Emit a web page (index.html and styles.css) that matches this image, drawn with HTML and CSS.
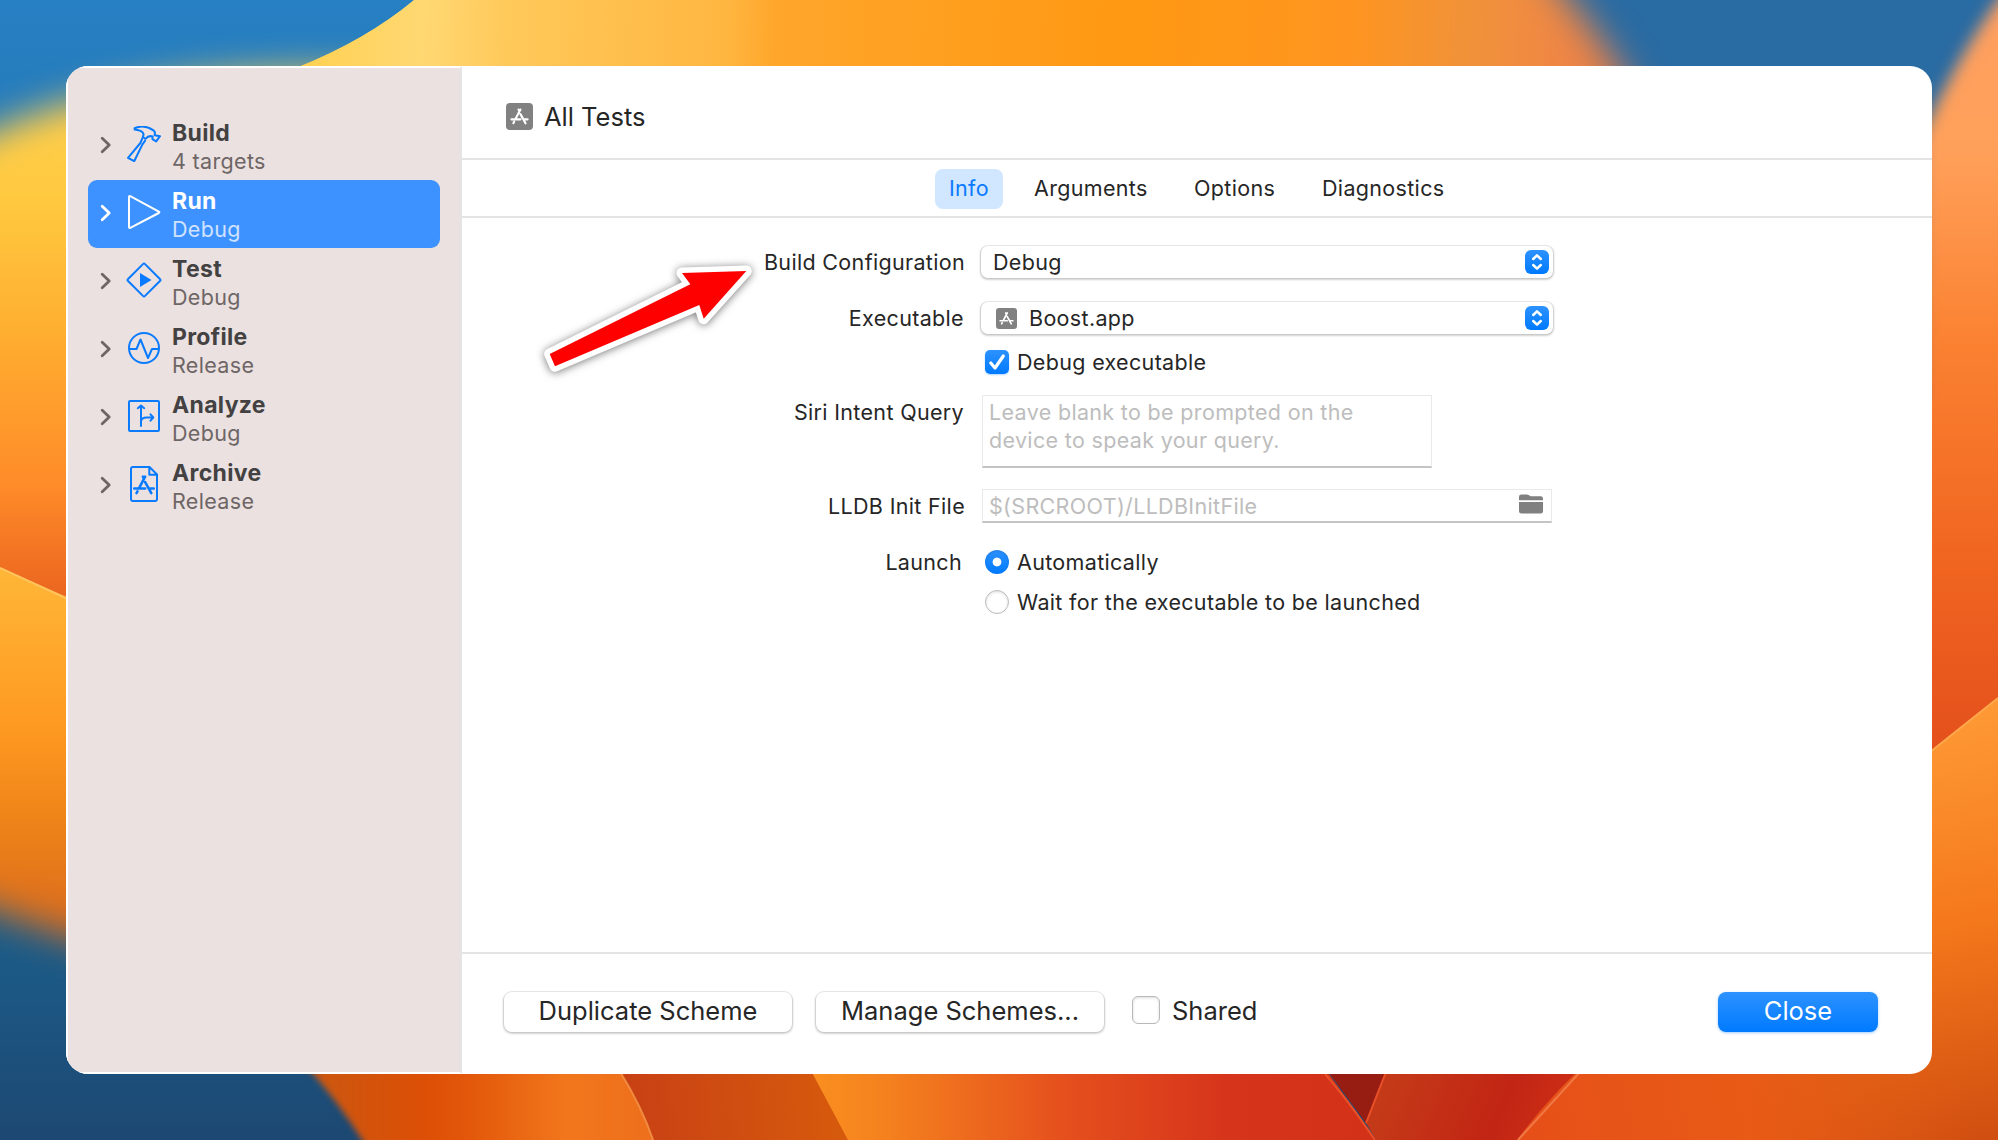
FILE: index.html
```html
<!DOCTYPE html>
<html lang="en">
<head>
<meta charset="utf-8">
<title>Scheme editor</title>
<link rel="stylesheet" href="styles.css">
</head>
<body>
<svg width="0" height="0" class="defs" aria-hidden="true">
  <symbol id="chevron" viewBox="0 0 12 18"><path d="M2.200 2.200 9.200 9l-7 6.800" fill="none" stroke="currentColor" stroke-width="2.800" stroke-linecap="round" stroke-linejoin="round"/></symbol>
  <symbol id="appstore" viewBox="0 0 24 24"><g fill="none" stroke="currentColor" stroke-width="2.700" stroke-linecap="round"><path d="M13.200 3.200 7 15M10.800 3.200 12 5.600M13.200 9 19.600 20.600M1.800 15.600h11.400M17.600 15.600h4.600M5.200 18.600l-1 1.800"/></g></symbol>
  <symbol id="updown" viewBox="0 0 24 24"><path d="M8.200 9 12 5.400l3.800 3.600M8.200 15l3.800 3.600 3.800-3.600" fill="none" stroke="#fff" stroke-width="2.500" stroke-linecap="round" stroke-linejoin="round"/></symbol>
</svg>

<svg class="wallpaper" viewBox="0 0 1998 1140" aria-hidden="true">
  <defs>
    <filter id="soft" x="-30%" y="-30%" width="160%" height="160%" color-interpolation-filters="sRGB"><feGaussianBlur stdDeviation="18"/></filter>
    <filter id="edge" x="-20%" y="-20%" width="140%" height="140%" color-interpolation-filters="sRGB"><feGaussianBlur stdDeviation="8"/></filter>
    <filter id="fine" x="-20%" y="-20%" width="140%" height="140%" color-interpolation-filters="sRGB"><feGaussianBlur stdDeviation="3"/></filter>
    <linearGradient id="blueL" x1="0" y1="0" x2="0" y2="1"><stop offset="0" stop-color="#2780c3"/><stop offset=".8" stop-color="#1c5f8b"/><stop offset="1" stop-color="#1c4873"/></linearGradient>
    <linearGradient id="left1" x1="0" y1="80" x2="0" y2="600" gradientUnits="userSpaceOnUse"><stop offset="0" stop-color="#ffd050"/><stop offset=".22" stop-color="#ffca40"/><stop offset=".48" stop-color="#ffaf30"/><stop offset=".78" stop-color="#ff8b29"/><stop offset="1" stop-color="#ea641f"/></linearGradient>
    <linearGradient id="left2" x1="0" y1="570" x2="0" y2="940" gradientUnits="userSpaceOnUse"><stop offset="0" stop-color="#ffb637"/><stop offset=".4" stop-color="#ff9b22"/><stop offset=".7" stop-color="#ed8218"/><stop offset="1" stop-color="#d9681f"/></linearGradient>
    <linearGradient id="petal" x1="300" y1="0" x2="1680" y2="40" gradientUnits="userSpaceOnUse"><stop offset="0" stop-color="#ffd050"/><stop offset=".09" stop-color="#ffd873"/><stop offset=".15" stop-color="#ffc95a"/><stop offset=".31" stop-color="#ffb640"/><stop offset=".345" stop-color="#ffa62b"/><stop offset=".6" stop-color="#ff9812"/><stop offset=".76" stop-color="#ff9520"/><stop offset=".85" stop-color="#f0923a"/><stop offset=".91" stop-color="#f08744"/><stop offset="1" stop-color="#e0744c"/></linearGradient>
    <linearGradient id="right1" x1="0" y1="0" x2="0" y2="750" gradientUnits="userSpaceOnUse"><stop offset="0" stop-color="#ff9f60"/><stop offset=".2" stop-color="#ffa05a"/><stop offset=".45" stop-color="#fb8232"/><stop offset=".75" stop-color="#f06520"/><stop offset="1" stop-color="#e4501c"/></linearGradient>
    <linearGradient id="right2" x1="1900" y1="700" x2="1990" y2="1140" gradientUnits="userSpaceOnUse"><stop offset="0" stop-color="#ff9d38"/><stop offset=".5" stop-color="#f5791c"/><stop offset="1" stop-color="#d04e10"/></linearGradient>
    <linearGradient id="bot1" x1="280" y1="0" x2="640" y2="0" gradientUnits="userSpaceOnUse"><stop offset="0" stop-color="#c65a14"/><stop offset=".4" stop-color="#dc4f06"/><stop offset=".52" stop-color="#e2570a"/><stop offset=".8" stop-color="#f2771c"/><stop offset="1" stop-color="#ee701c"/></linearGradient>
    <linearGradient id="bot2" x1="620" y1="1100" x2="840" y2="1080" gradientUnits="userSpaceOnUse"><stop offset="0" stop-color="#c84015"/><stop offset="1" stop-color="#d65a0c"/></linearGradient>
    <linearGradient id="bot3" x1="812" y1="0" x2="1370" y2="0" gradientUnits="userSpaceOnUse"><stop offset="0" stop-color="#fa8f20"/><stop offset=".14" stop-color="#f4801e"/><stop offset=".45" stop-color="#e5501d"/><stop offset=".75" stop-color="#d6341b"/><stop offset="1" stop-color="#d33218"/></linearGradient>
    <linearGradient id="bot4" x1="1390" y1="1075" x2="1540" y2="1140" gradientUnits="userSpaceOnUse"><stop offset="0" stop-color="#c43a18"/><stop offset=".7" stop-color="#c22514"/><stop offset="1" stop-color="#ca2c16"/></linearGradient>
    <linearGradient id="bot5" x1="1530" y1="1140" x2="1960" y2="1060" gradientUnits="userSpaceOnUse"><stop offset="0" stop-color="#e65018"/><stop offset=".5" stop-color="#e85a16"/><stop offset="1" stop-color="#e35d14" stop-opacity="0"/></linearGradient>
    <clipPath id="petalClip"><path d="M414 0Q366 40 296 68V140H1900V0Z"/></clipPath>
  </defs>
  <rect width="1998" height="1140" fill="url(#blueL)"/>
  <rect x="1500" width="498" height="400" fill="#296ba3"/>
  <g filter="url(#soft)"><path d="M-60 160Q60 84 250 74T420 100V650H-60Z" fill="url(#left1)"/><path d="M-60 560 70 600 400 700V1030Q180 985-60 890Z" fill="url(#left2)"/></g>
  <path d="M0 300H70V598L0 568Z" fill="url(#left1)"/>
  <path d="M0 568 70 600V800H0Z" fill="url(#left2)"/>
  <path d="M0 568 70 600" stroke="#ffc45c" stroke-width="2"/>
  <g clip-path="url(#petalClip)"><path d="M200-100H1500L1570 0Q1622 60 1670 160H200Z" fill="url(#petal)" filter="url(#soft)"/><path d="M414 0Q366 40 296 68V90H1400V0Z" fill="url(#petal)"/></g>
  <path d="M2060-60 1998 0Q1952 66 1920 140V800H2060Z" fill="url(#right1)" filter="url(#edge)"/>
  <path d="M1998 400V698L1910 768V400Z" fill="url(#right1)"/>
  <path d="M1998 698 1910 768V1200H1400V1060H1910Z" fill="#e85a16"/>
  <path d="M1998 698 1910 768V1060H1700V1140H1998Z" fill="url(#right2)"/>
  <path d="M1998 698 1910 768" stroke="#ffa84c" stroke-width="2"/>
  <path d="M250 1010Q318 1070 362 1140L400 1200H700V1010Z" fill="url(#bot1)" filter="url(#fine)"/>
  <path d="M608 1050Q636 1095 654 1140H860L800 1050Z" fill="url(#bot2)"/>
  <path d="M619 1070Q642 1107 653 1140" stroke="#f08b40" stroke-width="2" fill="none"/>
  <path d="M800 1050 848 1140H1376L1312 1050Z" fill="url(#bot3)"/>
  <path d="M1312 1050 1366 1123 1395 1050Z" fill="#971d12"/>
  <path d="M1395 1050 1366 1123 1376 1140H1530L1600 1050Z" fill="url(#bot4)"/>
  <path d="M1325 1074Q1348 1100 1375 1140M1386 1072 1366 1123" stroke="#ea5028" stroke-width="2" fill="none"/>
  <path d="M1600 1050Q1550 1095 1517 1140H1998V1070H1925V1050Z" fill="url(#bot5)"/>
  <path d="M1580 1072 1518 1140" stroke="#f07845" stroke-width="2"/>
</svg>

<main class="window">
  <aside class="sidebar">
    <div class="item">
      <svg class="chev"><use href="#chevron"/></svg>
      <svg class="ico" viewBox="0 0 36 36"><g fill="none" stroke="currentColor" stroke-width="2" stroke-linejoin="round"><path d="M8.600 2.200C14.500-.2 21.500.2 27.500 4.300l1.400 1.900-.2 3 5.300 1-3.800 5.200-3.800-2.300.2-2.600C23 9.300 21 11 19.500 12.800l-2.800-1.600C18.500 8 17.800 4.600 8.600 3.600Z"/><path d="M16.400 12.200 14.400 17 2 31.800l6.200 3.400L16.300 18.600l3.200-4.400"/></g></svg>
      <div class="names"><b>Build</b><span>4 targets</span></div>
    </div>
    <div class="item selected">
      <svg class="chev"><use href="#chevron"/></svg>
      <svg class="ico" viewBox="0 0 36 36"><path d="M3 2.900v30.200q0 1.400 1.300.8L32.800 19q1.200-.7 0-1.500L4.300 2.100Q3 1.600 3 2.900Z" fill="none" stroke="currentColor" stroke-width="2"/></svg>
      <div class="names"><b>Run</b><span>Debug</span></div>
    </div>
    <div class="item">
      <svg class="chev"><use href="#chevron"/></svg>
      <svg class="ico" viewBox="0 0 36 36"><rect x="6" y="6" width="24" height="24" rx="1.500" transform="rotate(45 18 18)" fill="none" stroke="currentColor" stroke-width="2"/><path d="M14 11v14l11.500-7Z" fill="currentColor"/></svg>
      <div class="names"><b>Test</b><span>Debug</span></div>
    </div>
    <div class="item">
      <svg class="chev"><use href="#chevron"/></svg>
      <svg class="ico" viewBox="0 0 36 36"><g fill="none" stroke="currentColor" stroke-width="2" stroke-linejoin="round"><circle cx="18" cy="18" r="15"/><path d="M3 19h7.500l4-9.500L22 28l4-9h7"/></g></svg>
      <div class="names"><b>Profile</b><span>Release</span></div>
    </div>
    <div class="item">
      <svg class="chev"><use href="#chevron"/></svg>
      <svg class="ico" viewBox="0 0 36 36"><g fill="none" stroke="currentColor" stroke-width="2" stroke-linejoin="round" stroke-linecap="round"><rect x="3" y="3" width="30" height="30" rx="1"/><path d="M15 28V8M11.800 10.200 15 7.500l3.200 2.700M15 23q1-3.500 5.500-3.500H27M24.500 16.300l2.800 3.200-2.800 3.200"/></g></svg>
      <div class="names"><b>Analyze</b><span>Debug</span></div>
    </div>
    <div class="item">
      <svg class="chev"><use href="#chevron"/></svg>
      <svg class="ico" viewBox="0 0 36 36"><g fill="none" stroke="currentColor" stroke-width="2" stroke-linejoin="round"><path d="M7 1H23.500L31 8.500V33q0 2-2 2H7q-2 0-2-2V3q0-2 2-2ZM23.300 1V8.800H31"/></g><use href="#appstore" x="6.500" y="7.500" width="23" height="23"/></svg>
      <div class="names"><b>Archive</b><span>Release</span></div>
    </div>
  </aside>

  <section class="content">
    <header class="title"><span class="badge big"><svg><use href="#appstore"/></svg></span><span class="t-all">All Tests</span></header>
    <nav class="tabs"><span class="tab on">Info</span><span class="tab t-arg">Arguments</span><span class="tab t-opt">Options</span><span class="tab t-diag">Diagnostics</span></nav>
    <div class="form">
      <div class="row r-config"><label>Build Configuration</label><div class="popup"><span>Debug</span><i><svg><use href="#updown"/></svg></i></div></div>
      <div class="row r-exec"><label>Executable</label><div class="popup app"><span class="badge"><svg><use href="#appstore"/></svg></span><span class="t-boost">Boost.app</span><i><svg><use href="#updown"/></svg></i></div></div>
      <div class="row r-check"><label></label><div class="choice"><span class="check"><svg viewBox="0 0 24 24"><path d="M5.800 13 10 18 18.300 6" fill="none" stroke="#fff" stroke-width="3.200" stroke-linecap="round" stroke-linejoin="round"/></svg></span><span>Debug executable</span></div></div>
      <div class="row r-siri"><label>Siri Intent Query</label><div class="area">Leave blank to be prompted on the<br>device to speak your query.</div></div>
      <div class="row r-lldb"><label>LLDB Init File</label><div class="field"><span>$(SRCROOT)/LLDBInitFile</span><svg class="folder" viewBox="0 0 26 20"><path d="M0 6V2.500Q0 0 2.500 0H8q1.500 0 2.500 1t2 1H22.500Q25 2 25 4.500V6ZM0 8H25V17.500Q25 20 22.500 20H2.500Q0 20 0 17.500Z" fill="#808080"/></svg></div></div>
      <div class="row r-auto"><label>Launch</label><div class="choice"><span class="radio on"></span><span>Automatically</span></div></div>
      <div class="row r-wait"><label></label><div class="choice"><span class="radio"></span><span>Wait for the executable to be launched</span></div></div>
    </div>
    <footer class="foot">
      <div class="btn">Duplicate Scheme</div><div class="btn t-man">Manage Schemes...</div>
      <span class="box"></span><span class="t-shared">Shared</span>
      <div class="btn close">Close</div>
    </footer>
  </section>
</main>

<svg class="arrow" viewBox="0 0 240 140" aria-hidden="true"><path d="M216.300 31 152 33 160.300 44.300 19.700 114 25 126.300 169.300 65 173.700 78.700Z" fill="#fff" stroke="#fff" stroke-width="11" stroke-linejoin="round"/><path d="M216.300 31 152 33 160.300 44.300 19.700 114 25 126.300 169.300 65 173.700 78.700Z" fill="#f00"/></svg>
</body>
</html>
```
FILE: styles.css
```css
* { box-sizing: border-box; }
body { margin: 0; width: 1998px; height: 1140px; overflow: hidden; padding: 66px; position: relative; background: #1c5f8b;
  font: 21.5px/28px Inter, "Liberation Sans", sans-serif; letter-spacing: .33px; color: #262626; }
.defs { position: absolute; }
.wallpaper { position: absolute; left: 0; top: 0; width: 1998px; height: 1140px; }
.window { position: relative; display: flex; width: 1866px; height: 1008px; border-radius: 22px; overflow: hidden; background: #fff; }
.sidebar { width: 396px; padding: 44px 20px 0; background: #eae1e0; border: 2px solid #fff; border-right-color: #e4e4e4; }
.item { display: flex; height: 68px; padding: 0 0 0 12px; border-radius: 9px; color: #0a7aff; align-items: flex-start; }
.chev { width: 12px; height: 18px; margin-top: 24px; color: #6e6565; }
.ico { width: 36px; height: 36px; margin: 14px 0 0 14px; }
.names { display: flex; flex-direction: column; margin-left: 10px; padding-top: 9px; }
.names b { font-size: 23px; font-weight: 650; line-height: 25px; color: #434141; }
.names span { line-height: 30px; color: #6e6565; }
.selected { background: #3e92ff; color: #fff; }
.selected .chev, .selected b { color: #fff; }
.selected .names span { color: #cfe2ff; }
.content { flex: 1; display: flex; flex-direction: column; }
.title { display: flex; align-items: center; height: 94px; padding: 9px 0 0 44px; border-bottom: 2px solid #e4e4e4; font-size: 25.5px; letter-spacing: 0; }
.badge { display: flex; align-items: center; justify-content: center; width: 21px; height: 21px; border-radius: 3px; background: #818181; color: #fff; }
.badge svg { width: 15px; height: 15px; }
.badge.big { width: 27px; height: 27px; border-radius: 4px; }
.badge.big svg { width: 19px; height: 19px; }
.t-all { margin-left: 11px; padding-top: 1px; }
.tabs { display: flex; align-items: center; height: 58px; padding: 2px 0 0 473px; border-bottom: 2px solid #e4e4e4; }
.tab { height: 40px; line-height: 38px; white-space: nowrap; }
.tab.on { width: 68px; text-align: center; border-radius: 8px; background: #d1e6ff; color: #0a7aff; }
.t-arg { margin-left: 31px; width: 160px; }
.t-opt { width: 128px; }
.form { flex: 1; padding-top: 28px; }
.row { display: flex; align-items: flex-start; white-space: nowrap; }
label { width: 503px; text-align: right; line-height: 32px; }
.popup { display: flex; align-items: center; margin-left: 16px; width: 572px; height: 32px; padding: 0 4px 0 12px; border-radius: 7px; box-shadow: 0 0 0 1px #0000000d, 0 1px 2px 1px #0000002e; background: #fff; }
.popup i { display: block; margin-left: auto; width: 24px; height: 24px; border-radius: 6px; background: linear-gradient(#2d92ff, #007aff); }
.popup i svg { display: block; width: 24px; height: 24px; }
.popup.app { padding-left: 15px; }
.t-boost { margin-left: 12px; }
.r-exec { margin-top: 24px; }
.r-exec label, .r-siri label { padding-right: 1px; }
.r-check { margin-top: 16px; height: 24px; }
.choice { display: flex; align-items: center; height: 24px; margin-left: 20px; }
.choice > span:last-child { margin-left: 8px; }
.check { width: 24px; height: 24px; border-radius: 5px; background: linear-gradient(#2d92ff, #007aff); box-shadow: 0 1px 2px #007aff50; }
.check svg { display: block; width: 24px; height: 24px; }
.r-siri { margin-top: 21px; }
.r-siri label { line-height: 34px; }
.area, .field { margin-left: 17px; border: 1px solid #e9e9e9; border-bottom: 2px solid #c4c4c4; color: #bdbdbd; }
.area { width: 450px; height: 73px; padding: 2px 0 0 6px; }
.r-lldb { margin-top: 21px; }
.r-lldb label { line-height: 34px; }
.field { display: flex; width: 570px; height: 34px; align-items: center; justify-content: space-between; padding: 0 7px 0 6px; }
.folder { width: 25px; height: 20px; margin-top: -4px; }
.r-auto { margin-top: 27px; height: 24px; }
.r-auto label { line-height: 24px; padding-right: 3px; }
.radio { width: 24px; height: 24px; border-radius: 50%; background: #fff; border: 1px solid #bbb; box-shadow: inset 0 1px 3px #0002; }
.radio.on { border: 0; background: radial-gradient(circle, #fff 0 4px, transparent 4.800px), linear-gradient(#2d92ff, #007aff); }
.r-wait { margin-top: 16px; }
.foot { height: 122px; padding: 38px 54px 0 42px; display: flex; border-top: 2px solid #e4e4e4; font-size: 25.500px; letter-spacing: 0; white-space: nowrap; }
.btn { width: 288px; height: 40px; line-height: 37px; text-align: center; border-radius: 8px; box-shadow: 0 0 0 1px #0000000d, 0 1px 2px 1px #0000002e; }
.t-man { margin-left: 24px; }
.box { width: 28px; height: 28px; margin: 4px 12px 0 28px; border: 1px solid #b9b9b9; border-radius: 6px; box-shadow: inset 0 1px 3px #0002; }
.t-shared { line-height: 37px; }
.btn.close { margin-left: auto; width: 160px; color: #fff; background: linear-gradient(#2d92ff, #007aff); box-shadow: 0 1px 3px #007aff60; }
.arrow { position: absolute; left: 530px; top: 240px; width: 240px; height: 140px; filter: drop-shadow(0 1px 4px #0008); }
```
